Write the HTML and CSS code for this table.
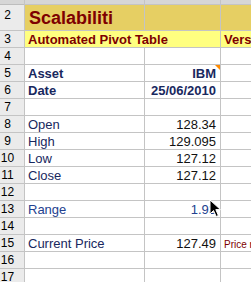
FILE: index.html
```html
<!DOCTYPE html>
<html lang="en">
<head>
    <meta charset="UTF-8">
    <title>Scalabiliti - Pivot</title>
    <link rel="stylesheet" href="styles.css">
</head>
<body>
    <div class="sheet">
        <div class="row r-top">
            <div class="head"></div><div class="cell"></div><div class="cell"></div><div class="cell"></div>
        </div>
        <div class="row r-title">
            <div class="head head-sel">2</div>
            <div class="cell title">Scalabiliti</div>
            <div class="cell"></div>
            <div class="cell"></div>
        </div>
        <div class="row r-sub">
            <div class="head">3</div>
            <div class="cell span2 sub">Automated Pivot Table</div>
            <div class="cell sub">Vers</div>
        </div>
        <div class="row"><div class="head">4</div><div class="cell"></div><div class="cell"></div><div class="cell"></div></div>
        <div class="row">
            <div class="head">5</div>
            <div class="cell label bold">Asset</div>
            <div class="cell num bold note">IBM</div>
            <div class="cell"></div>
        </div>
        <div class="row">
            <div class="head">6</div>
            <div class="cell label bold">Date</div>
            <div class="cell num bold">25/06/2010</div>
            <div class="cell"></div>
        </div>
        <div class="row"><div class="head">7</div><div class="cell"></div><div class="cell"></div><div class="cell"></div></div>
        <div class="row"><div class="head">8</div><div class="cell label">Open</div><div class="cell num">128.34</div><div class="cell"></div></div>
        <div class="row"><div class="head">9</div><div class="cell label">High</div><div class="cell num">129.095</div><div class="cell"></div></div>
        <div class="row"><div class="head">10</div><div class="cell label">Low</div><div class="cell num">127.12</div><div class="cell"></div></div>
        <div class="row"><div class="head">11</div><div class="cell label">Close</div><div class="cell num">127.12</div><div class="cell"></div></div>
        <div class="row"><div class="head">12</div><div class="cell"></div><div class="cell"></div><div class="cell"></div></div>
        <div class="row"><div class="head">13</div><div class="cell label blue">Range</div><div class="cell num blue">1.93</div><div class="cell"></div></div>
        <div class="row"><div class="head">14</div><div class="cell"></div><div class="cell"></div><div class="cell"></div></div>
        <div class="row">
            <div class="head">15</div>
            <div class="cell label">Current Price</div>
            <div class="cell num">127.49</div>
            <div class="cell small-note">Price r</div>
        </div>
        <div class="row"><div class="head">16</div><div class="cell"></div><div class="cell"></div><div class="cell"></div></div>
        <div class="row"><div class="head">17</div><div class="cell"></div><div class="cell"></div><div class="cell"></div></div>
    </div>

    <!-- mouse pointer hovering the range value -->
    <svg class="pointer" width="13" height="19" viewBox="0 0 13 19">
        <path d="M1 1 L1 15 L4.5 11.5 L7.2 17.5 L9.4 16.5 L6.8 10.6 L11.5 10.6 Z" fill="#000" stroke="#fff" stroke-width="1"/>
    </svg>
</body>
</html>
```

FILE: styles.css
```css
:root {
    --grid-color: #c4c4c4;
    --head-bg: #ebebeb;
    --band-bg: #d6d6d6;
    --title-bg: #e6cf63;
    --sub-bg: #ffff80;
    --maroon: #7d0000;
    --navy: #18285e;
    --blue: #23418f;
}

body {
    margin: 0;
    overflow: hidden;
    background: #fff;
    font-family: "Liberation Sans", Arial, sans-serif;
    color: #000;
}

.sheet {
    display: flex;
    flex-direction: column;
    gap: 1px;
    background: var(--grid-color);
    width: 251px;
    height: 282px;
    overflow: hidden;
}

.row {
    display: grid;
    grid-template-columns: 24px 119px 75px 1fr;
    column-gap: 1px;
    height: 16px;
    flex-shrink: 0;
}

.cell {
    background: #fff;
    display: flex;
    align-items: flex-end;
    font-size: 13px;
    line-height: 15px;
    white-space: nowrap;
    overflow: hidden;
    padding: 0 4px 0 3px;
}

.head {
    background: var(--head-bg);
    font-size: 12px;
    line-height: 16px;
    text-align: center;
    padding-right: 9px;
}

.r-top {
    height: 4px;
}

.r-top .head,
.r-top .cell {
    background: var(--band-bg);
}

.r-title {
    height: 25px;
}

.r-title .cell {
    background: var(--title-bg);
}

.head-sel {
    background: linear-gradient(var(--band-bg) 0 4px, #bdbdbd 4px 5px, var(--head-bg) 5px);
    border-top: 1px dotted #6f7cff;
    line-height: 30px;
    margin-top: -6px;
}

.title {
    color: var(--maroon);
    font-size: 18px;
    font-weight: bold;
    line-height: 22px;
    padding-left: 4px;
    padding-bottom: 1px;
}

.r-sub .cell {
    background: var(--sub-bg);
}

.span2 {
    grid-column: span 2;
}

.sub {
    color: var(--maroon);
    font-weight: bold;
    line-height: 15px;
}

.label {
    color: var(--navy);
}

.num {
    justify-content: flex-end;
    color: #111;
}

.bold {
    font-weight: bold;
    color: var(--navy);
}

.blue {
    color: var(--blue);
}

.note {
    position: relative;
}

.note::after {
    content: "";
    position: absolute;
    top: 0;
    right: 0;
    border-top: 5px solid #ff8a00;
    border-left: 5px solid transparent;
}

.small-note {
    color: var(--maroon);
    font-size: 10px;
    line-height: 13px;
}

.pointer {
    position: absolute;
    left: 209px;
    top: 199px;
}
```
